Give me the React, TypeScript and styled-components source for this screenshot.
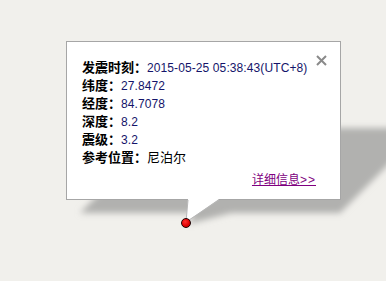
import React from 'react'
import styled, { createGlobalStyle } from 'styled-components'

const GlobalStyle = createGlobalStyle`
  html, body {
    margin: 0;
    padding: 0;
    background: #f1f0ec;
  }
`

type Row = { label: string, value: string, dark?: boolean }

const rows: Row[] = [
  { label: '发震时刻：', value: '2015-05-25 05:38:43(UTC+8)' },
  { label: '纬度：', value: '27.8472' },
  { label: '经度：', value: '84.7078' },
  { label: '深度：', value: '8.2' },
  { label: '震级：', value: '3.2' },
  { label: '参考位置：', value: '尼泊尔', dark: true },
]

const MapCanvas = styled.div`
  position: relative;
  width: 386px;
  height: 281px;
  overflow: hidden;
  background: #f1f0ec;
`

const ShadowLayer = styled.svg`
  position: absolute;
  left: 0;
  top: 0;
`

const InfoWindow = styled.div`
  position: absolute;
  left: 66px;
  top: 41px;
  width: 234px;
  height: 131px;
  padding: 16px 24px 10px 15px;
  background: #fff;
  border: 1px solid #a6a6a6;
  display: flex;
  flex-direction: column;
`

const Close = styled.div`
  position: absolute;
  right: 13px;
  top: 10px;
  width: 11px;
  height: 11px;
  cursor: pointer;
`

const InfoRow = styled.div`
  display: flex;
  align-items: baseline;
  height: 18px;
  line-height: 18px;
  white-space: nowrap;
`

const Label = styled.span`
  font-family: "Noto Sans CJK SC", sans-serif;
  font-weight: bold;
  font-size: 13px;
  color: #000;
`

const Value = styled.span<{ $dark?: boolean }>`
  font-family: ${p => p.$dark ? '"Noto Sans CJK SC", sans-serif' : '"Liberation Sans", "Noto Sans CJK SC", sans-serif'};
  font-size: ${p => p.$dark ? '13px' : '12px'};
  letter-spacing: ${p => p.$dark ? '0' : '0.1px'};
  color: ${p => p.$dark ? '#000' : '#14146a'};
`

const LinkRow = styled.div`
  margin-top: 4px;
  display: flex;
  justify-content: flex-end;
  line-height: 18px;
`

const DetailLink = styled.a`
  font-family: "Noto Sans CJK SC", sans-serif;
  font-size: 12px;
  color: #800080;
  text-decoration: underline;
  .arrows {
    font-family: "Liberation Sans", sans-serif;
    font-size: 12px;
    letter-spacing: 1px;
  }
`

const Tail = styled.svg`
  position: absolute;
  left: 0;
  top: 0;
`

const Marker = styled.div`
  position: absolute;
  left: 181px;
  top: 218px;
  width: 8px;
  height: 8px;
  border-radius: 50%;
  background: radial-gradient(circle at 40% 35%, #ff3030, #e00000 60%, #b00000);
  border: 1px solid #200000;
`

export default function App() {
  return (
    <MapCanvas>
      <GlobalStyle />
      <ShadowLayer width="386" height="281">
        <defs>
          <filter id="blur" x="-20%" y="-20%" width="140%" height="140%">
            <feGaussianBlur stdDeviation="3" />
          </filter>
        </defs>
        <g filter="url(#blur)" fill="#b1b1af">
          <polygon points="80,213 340,213 425,128 165,128" />
          <polygon points="195,212 235,212 188,224" />
        </g>
      </ShadowLayer>
      <InfoWindow>
        <Close>
          <svg width="11" height="11" viewBox="0 0 11 11">
            <path d="M1 1 L10 10 M10 1 L1 10" stroke="#8a8a8a" strokeWidth="2" />
          </svg>
        </Close>
        {rows.map(r => (
          <InfoRow key={r.label}>
            <Label>{r.label}</Label>
            <Value $dark={r.dark}>{r.value}</Value>
          </InfoRow>
        ))}
        <LinkRow>
          <DetailLink href="#">详细信息<span className="arrows">&gt;&gt;</span></DetailLink>
        </LinkRow>
      </InfoWindow>
      <Tail width="386" height="281">
        <polygon points="188,199 219,199 186,222" fill="#fff" />
        <path d="M188 200 L186 222 L219 200" fill="none" stroke="#b8b8b8" strokeWidth="1" />
      </Tail>
      <Marker />
    </MapCanvas>
  )
}
